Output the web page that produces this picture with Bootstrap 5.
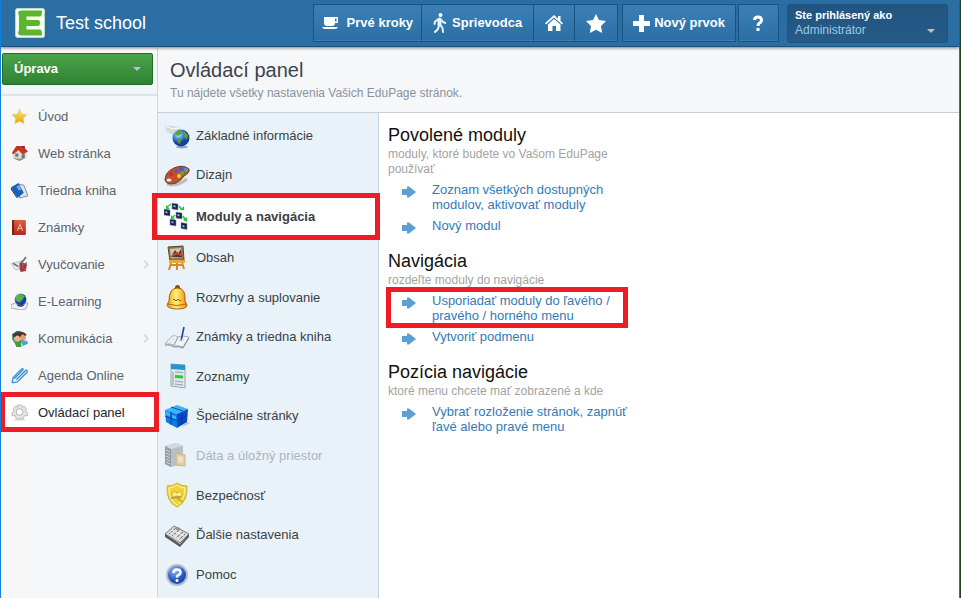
<!DOCTYPE html>
<html lang="sk">
<head>
<meta charset="utf-8">
<meta name="viewport" content="width=device-width, initial-scale=1">
<title>Test school – Ovládací panel</title>
<link href="https://cdn.jsdelivr.net/npm/bootstrap@5.3.0/dist/css/bootstrap.min.css" rel="stylesheet">
<style>
body{font-family:"Liberation Sans",Arial,sans-serif;font-size:13px;line-height:15px;color:#3c434b;background:#fff;border-left:1px solid #1580d8;border-right:1px solid #1c4a1c}
a{text-decoration:none}
.app-shell{border-right:1px solid #1a78c4}
.topbar{min-height:47px;background:#2b6ea3;border-bottom:1px solid #1b4f7c;box-shadow:0 1px 3px rgba(0,0,0,.5);padding:3px 11px 3px 14px;z-index:5}
.school{font-size:18px;line-height:22px;color:#fff;padding-left:3px}
.tool{height:38px;border:1px solid #1c527f;border-radius:0;background:linear-gradient(#3a80b7,#2c6ea4);box-shadow:inset 0 -1px #3a7db3;color:#fff;font-size:13px;line-height:16px;font-weight:700;padding:0 8px;margin-left:-1px}
.tool:hover{color:#fff;background:#3a80b7}
.tool-wide{padding:0 11px}
.tool-guide{gap:6px}
.tool-new{padding:0 10px}
.tool-help{margin-left:2px}
.userbox{width:161px;height:39px;background:linear-gradient(#22557f,#255b88);border:1px solid #1f5280;border-radius:3px;color:#9fc8ec;font-size:12px;line-height:15px;padding:0 12px 0 7px;text-align:left}
.userbox strong{font-size:11px;color:#fff}
.caret{border:4px solid transparent;border-top-color:#b9c4cc;border-bottom:0}
.sidebar{width:157px;background:#f6f7f9;border-right:1px solid #cfd5da}
.side-top{padding:6px 4px 9px 1px;background:linear-gradient(#f8f9fb,#f1f5fa);border-bottom:2px solid #dfe4e9}
.side-list{padding-top:2px}
.edit-btn{height:32px;background:linear-gradient(#4aa44b,#2f8233);border:1px solid #246a27;border-radius:2px;color:#fff;font-weight:700;font-size:13px;padding:0 11px}
.edit-btn:hover{background:#3b923e;color:#fff}
.side-link{height:37px;padding:0 8px 0 10px;gap:10px;color:#58636e}
.side-link.current{background:#fff;color:#22272c;position:relative}
.current::after{content:"";position:absolute;border:5px solid #ee1c24;pointer-events:none;z-index:3}
.side-link.current::after{inset:-2px -2px -1px -1px}
.page-head{background:#f6f7f9;border-bottom:1px solid #c9cfd5;padding:11px 12px 11px;min-height:66px}
.page-head h1{font-size:20px;line-height:24px;color:#3b4450;margin:0 0 4px}
.page-head p{font-size:12px;line-height:15px;color:#8793a0;margin:0}
.panel-menu{width:221px;background:#e9f2f8;border-right:1px solid #c3d6e8;padding:3px 0 4px}
.panel-link{height:40px;padding:0 6px;gap:6px;color:#3b3f46}
li:nth-child(1)>.panel-link,li:nth-child(2)>.panel-link,li:nth-child(4)>.panel-link,li:nth-child(6)>.panel-link,li:nth-child(8)>.panel-link,li:nth-child(11)>.panel-link{height:39px}
.panel-link.current{height:44px;background:#fff;font-weight:700;position:relative}
.panel-link.current::after{inset:-1px -2px -2px -6px}
.panel-link.off{color:#adb5bc}
.options{padding:11px 9px;background:#fff}
.group{max-width:246px;margin-bottom:16px}
.group h2{font-size:18px;line-height:23px;color:#111;margin:0;font-weight:400}
.group p{font-size:12px;line-height:15px;color:#a3a3a3;margin:0 0 5px}
.group li{padding-left:14px;gap:16px;margin-bottom:6px}
.group a{color:#337ab7}
.group svg{margin-top:4px}
.marked{position:relative}
.marked::after{content:"";position:absolute;inset:-6px 6px -5px -2px;border:5px solid #ee1c24;pointer-events:none}
svg{flex:none;display:block}
</style>
<script src="https://cdn.jsdelivr.net/npm/bootstrap@5.3.0/dist/js/bootstrap.bundle.min.js"></script>
</head>
<body>
<svg width="0" height="0" class="position-absolute" aria-hidden="true">
<defs>
<linearGradient id="gGold" x2="0" y2="1"><stop stop-color="#ffe873"/><stop offset="1" stop-color="#dfa40c"/></linearGradient>
<linearGradient id="gBell" x2="1" y2="0"><stop stop-color="#ee9a0c"/><stop offset=".45" stop-color="#fff07a"/><stop offset="1" stop-color="#ef9000"/></linearGradient>
<radialGradient id="gGlobe" cx=".35" cy=".3"><stop stop-color="#cdeeff"/><stop offset=".5" stop-color="#4a97dc"/><stop offset="1" stop-color="#173fa0"/></radialGradient>
<radialGradient id="gHelp" cx=".4" cy=".3"><stop stop-color="#8fb6ff"/><stop offset="1" stop-color="#1c4fb8"/></radialGradient>
<linearGradient id="gRed" x2="0" y2="1"><stop stop-color="#e06045"/><stop offset="1" stop-color="#b0281a"/></linearGradient>
<symbol id="arrow" viewBox="0 0 14 12"><path d="M0 3h5V.500h2L14 6l-7 5.500H5V9H0z" fill="#5b9fd3"/></symbol>
<symbol id="chev" viewBox="0 0 6 9"><path d="M1 .5l4 4-4 4" fill="none" stroke="#d9dcdf" stroke-width="1.800"/></symbol>
</defs>
</svg>
<div class="app-shell d-flex flex-column min-vh-100">
<header class="topbar d-flex align-items-center position-relative">
  <a href="#" class="d-flex align-items-center gap-2 me-auto">
    <svg width="30" height="30" viewBox="0 0 30 30"><rect x=".5" y=".5" width="29" height="29" rx="2" fill="#f7fff3" stroke="#b8ddc4"/><path d="M7 2.500h20q0 6-2 6H11.500V12H23q2 0 2 3t-2 3H11.500v3.500H25q2 0 2 6H7q-4 0-4-3 1-1.500 1-4V9Q4 6 3 5q0-2.500 4-2.500z" fill="#5bb531"/></svg>
    <span class="school">Test school</span>
  </a>
  <nav class="d-flex" aria-label="Nástroje">
    <button type="button" class="btn tool d-flex align-items-center gap-2"><svg width="17" height="14" viewBox="0 0 17 14" fill="#fff"><path d="M2 1h14v6h-3q0 3-3 3H5Q2 10 2 7zm11 1.500V5.500h1.500v-3zM0 11h16q-1 2-3 2H3q-2 0-3-2z" fill-rule="evenodd"/></svg>Prvé kroky</button>
    <button type="button" class="btn tool tool-wide tool-guide d-flex align-items-center"><svg width="13" height="20" viewBox="0 0 13 20" fill="none" stroke="#e4f3ff" stroke-linecap="round" stroke-linejoin="round"><circle cx="7.500" cy="2" r="2" fill="#fff" stroke="none"/><path d="M6.500 6.500v5" stroke-width="4"/><path d="M5.500 6L2 8.500 1.500 11M8 6.500l2 2.500 2.500 1M6 12l-1 4-3 3M7.500 12l2 3 .5 4" stroke-width="2"/></svg>Sprievodca</button>
    <button type="button" class="btn tool tool-wide" aria-label="Domov"><svg width="18" height="16" viewBox="0 0 18 16" fill="#fff"><path d="M9 0l4 3.700V1h2.500v5L18 8.300 17 9.500 9 2.500 1 9.500 0 8.300zM9 4l6.500 5.500V16H11v-5H7.500v5H3V9.500z"/></svg></button>
    <button type="button" class="btn tool tool-wide" aria-label="Obľúbené"><svg width="20" height="19" viewBox="0 0 20 19"><path d="M10 0l3 6 7 1-5 5 1.200 7L10 15.700 3.800 19 5 12 0 7l7-1z" fill="#fff"/></svg></button>
    <button type="button" class="btn tool tool-new d-flex align-items-center gap-1 ms-1"><svg width="17" height="17" viewBox="0 0 17 17"><path d="M6 0h5v6h6v5h-6v6H6v-6H0V6h6z" fill="#fff"/></svg>Nový prvok</button>
    <button type="button" class="btn tool tool-wide tool-help" aria-label="Pomoc"><svg width="17" height="17" viewBox="0 0 17 17"><path d="M4.500 5Q4.500 2 8 2t3.500 3Q11.500 7 9.500 8 8 9 8 11" fill="none" stroke="#fff" stroke-width="3"/><path d="M6.500 13h3v3h-3z" fill="#fff"/></svg></button>
  </nav>
  <button type="button" class="btn userbox d-flex align-items-center justify-content-between ms-2"><span><strong>Ste prihlásený ako</strong><br>Administrátor</span><span class="caret mt-3"></span></button>
</header>
<div class="d-flex flex-fill">
<aside class="sidebar flex-shrink-0">
  <div class="side-top"><button type="button" class="btn edit-btn w-100 d-flex align-items-center justify-content-between">Úprava<span class="caret"></span></button></div>
  <ul class="list-unstyled side-list mb-0">
    <li><a class="side-link d-flex align-items-center" href="#"><svg width="17" height="17" viewBox="0 0 16 16"><path d="M8 1l2 4.600 5 .7-3.600 3.500.9 4.900L8 12.500l-4.500 2.200 1-4.900L1 6.300l5-.7z" fill="url(#gGold)" stroke="#e5c35a" stroke-width=".5"/></svg>Úvod</a></li>
    <li><a class="side-link d-flex align-items-center" href="#"><svg width="17" height="17" viewBox="0 0 16 16"><path d="M1 7l6-5 7 3 1 7-7 3-6-3z" fill="#dedede"/><path d="M5 1h6l5 5-5 3-4-4-5 4-1-2z" fill="#c93422"/><path d="M10 1h3v3z" fill="#7b271b"/><path d="M4 8h3v3H4zM10 9l3-1v4l-3 1z" fill="#777"/><path d="M1 12l7 3 6-3-6 1z" fill="#89967b"/></svg>Web stránka</a></li>
    <li><a class="side-link d-flex align-items-center" href="#"><svg width="17" height="17" viewBox="0 0 16 16"><path d="M7 2l5 1 4 10-8 2z" fill="#dce6ee" stroke="#536f88" stroke-width=".7"/><path d="M0 5l7-4 5 9-6 5z" fill="#1d5fb4"/><path d="M5 4l3-1 2 4-3 1z" fill="#71a9e5"/><path d="M0 5l6 10-1-.5L0 7z" fill="#0c356f"/></svg>Triedna kniha</a></li>
    <li><a class="side-link d-flex align-items-center" href="#"><svg width="17" height="17" viewBox="0 0 16 16"><rect x="1" y="1" width="13" height="14" rx="1" fill="url(#gRed)"/><path d="M1 1h2v14H1z" fill="#822216"/><path d="M6 11l2.500-6L11 11M7 9h3" fill="none" stroke="#efb49c"/></svg>Známky</a></li>
    <li><a class="side-link d-flex align-items-center" href="#"><svg width="17" height="17" viewBox="0 0 16 16"><path d="M0 7l9-2 2 7-7 1z" fill="#e6e9ed" stroke="#a2aab3" stroke-width=".6"/><path d="M2 7l5 3M14 1L9 8" stroke="#5e6b78" stroke-width="1.500"/><path d="M8 6l7 1-1 7-5 1-1-4z" fill="#b42d36"/><path d="M10 4l1 5 4-3M10 10l4 3" stroke="#6e7379" fill="none"/></svg><span class="flex-fill">Vyučovanie</span><svg width="6" height="9"><use href="#chev"/></svg></a></li>
    <li><a class="side-link d-flex align-items-center" href="#"><svg width="17" height="17" viewBox="0 0 16 16"><path d="M0 11l5-2 5 2 6-2-2 6-5 1-9-2z" fill="#eef0f3" stroke="#8c97a4" stroke-width=".7"/><circle cx="9" cy="6" r="5.500" fill="url(#gGlobe)"/><path d="M5 3l4-2 4 2-3 3-2 3-3-2z" fill="#5cb631"/><path d="M5 10q4 3 8 0l-1 2q-3 2-6 0z" fill="#243b69"/></svg>E-Learning</a></li>
    <li><a class="side-link d-flex align-items-center" href="#"><svg width="17" height="17" viewBox="0 0 16 16"><circle cx="7" cy="7" r="6" fill="#3b8a72"/><path d="M1 4l5-3 6 1-3 3-7 2z" fill="#26536b"/><circle cx="6" cy="8" r="3" fill="#eeb88a"/><circle cx="11" cy="7" r="3" fill="#dda16e"/><path d="M3 6q3-4 6 0M8 5q3-4 6 0" stroke="#5b2c16" fill="none" stroke-width="2"/><path d="M3 11h6l1 5H5z" fill="#459b37"/><path d="M9 10h6l1 3-5 2z" fill="#43a6dd"/></svg><span class="flex-fill">Komunikácia</span><svg width="6" height="9"><use href="#chev"/></svg></a></li>
    <li><a class="side-link d-flex align-items-center" href="#"><svg width="17" height="17" viewBox="0 0 16 16" fill="none" stroke="#3f93d3" stroke-width="1.300"><path d="M1 15l1-5 8-8q2-1 1 1l-8 8M1 15l5-1 9-9q1-2-1-2l-9 9"/></svg>Agenda Online</a></li>
    <li><a class="side-link current d-flex align-items-center" href="#" aria-current="page"><svg width="17" height="17" viewBox="0 0 16 16"><path d="M6 1h4l.5 2 2-1 2 3-1 2 2 1v3h-3l-1 3H5l-1-3H1V8l2-1-1-2 2-3 2 1z" fill="#e5e5e5" stroke="#aaa" stroke-width=".7"/><circle cx="8" cy="7.500" r="3" fill="#fff" stroke="#bbb"/><path d="M3 15h10" stroke="#ccc"/></svg>Ovládací panel</a></li>
  </ul>
</aside>
<main class="flex-fill d-flex flex-column">
  <div class="page-head"><h1 class="fw-normal">Ovládací panel</h1><p>Tu nájdete všetky nastavenia Vašich EduPage stránok.</p></div>
  <div class="d-flex flex-fill">
  <nav class="panel-menu flex-shrink-0" aria-label="Nastavenia">
    <ul class="list-unstyled mb-0">
      <li><a class="panel-link d-flex align-items-center" href="#"><svg width="26" height="26" viewBox="0 0 26 26"><path d="M1 2l14 2 3 7-7 3-9-6z" fill="#d5dadd"/><path d="M2 3l6 3 7-1" stroke="#fff" fill="none"/><ellipse cx="18" cy="24" rx="6" ry="1.500" fill="#9aa8b3"/><circle cx="17" cy="15" r="8.500" fill="url(#gGlobe)"/><path d="M11 11l3-4 4 1-1 3-3 2zM13 15l4 1-1 5-2-1zM20 8l4 4-1 5-3-3z" fill="#5a9e38"/></svg>Základné informácie</a></li>
      <li><a class="panel-link d-flex align-items-center" href="#"><svg width="26" height="26" viewBox="0 0 26 26"><path d="M3 22q10 3 20-5" stroke="#b7bec5" stroke-width="3" fill="none"/><path d="M1 18Q1 10 10 6t15 1q1 4-5 7-2 4-8 7-9 3-11-3z" fill="#b4582a" stroke="#7d3718"/><ellipse cx="5" cy="18" rx="2.500" ry="1.500" fill="#e9f2f8"/><g><circle cx="7" cy="12" r="2" fill="#e0222c"/><circle cx="12" cy="9" r="2" fill="#8d3bd6"/><circle cx="17" cy="7" r="2" fill="#3859e2"/><circle cx="22" cy="8" r="2" fill="#30a6dc"/><circle cx="10" cy="16" r="2" fill="#f03a2b"/><circle cx="15" cy="14" r="2" fill="#f2ce28"/><circle cx="18" cy="11" r="1.800" fill="#4cb83e"/></g></svg>Dizajn</a></li>
      <li><a class="panel-link current d-flex align-items-center" href="#" aria-current="true"><svg width="26" height="28" viewBox="0 0 26 28"><g fill="#111e48" stroke="#8792ab" stroke-width=".6"><path d="M8 1l6 1v6l-6-1zM0 7l6 1v6l-6-1zM12 10l6 1v6l-6-1zM6 17l6 1v6l-6-1zM17 20.500l6 1v6l-6-1z"/></g><g fill="#8fbdf0"><path d="M9.500 3l2 .5v2l-2-.5zM1.500 9l2 .5v2l-2-.5zM13.500 12l2 .5v2l-2-.5zM7.500 19l2 .5v2l-2-.5zM18.500 23l2 .5v2l-2-.5z"/></g><path d="M7 2L3 5M15 4l3 4M11 13l-3 3M19 14l3 5" stroke="#28c83c" stroke-width="1.500"/><path d="M2 3v4h4zM16 8h4V4zM7 13v4h4zM19 18l4 2V15z" fill="#28c83c"/></svg>Moduly a navigácia</a></li>
      <li><a class="panel-link d-flex align-items-center" href="#"><svg width="26" height="26" viewBox="0 0 26 26"><path d="M8 14L5 25M17 14l3 10M13 17v8M6 20h13" stroke="#d38c2b" stroke-width="2"/><path d="M4 2l15-1 1 14-14 1z" fill="#9f7847" stroke="#63411f"/><path d="M6 4l11-1 1 9-11 1z" fill="#c8c9b8"/><path d="M7 12l4-7 3 4 3-5 1 8z" fill="#483a38"/><path d="M8 11l5-3 4 2" stroke="#d6442c" stroke-width="2" fill="none"/><path d="M5 15h16v3H5z" fill="#e7a746"/></svg>Obsah</a></li>
      <li><a class="panel-link d-flex align-items-center" href="#"><svg width="26" height="26" viewBox="0 0 26 26"><circle cx="13.500" cy="3.500" r="2.500" fill="#8c4b14"/><path d="M5 17Q5 4 13.500 4T21 17l2 4q0 4-9.500 4T3 21z" fill="url(#gBell)" stroke="#a95e08"/><path d="M4 20q9 3 18 0" stroke="#b76906" fill="none"/><path d="M9 16q1-2 2 0t2 0 2 0 2 0" stroke="#8b5a0d" fill="none"/></svg>Rozvrhy a suplovanie</a></li>
      <li><a class="panel-link d-flex align-items-center" href="#"><svg width="26" height="26" viewBox="0 0 26 26"><path d="M1 20l7-8q4-1 6 1 4-2 11 0l-6 10q-6-2-8-1-4-3-10-2z" fill="#f4f5f7" stroke="#a7aeb8"/><path d="M14 13l-4 8M1 21q6-1 9 2 5-1 9 1l6-10" stroke="#858e9b" fill="none"/><path d="M20 3l-3 14" stroke="#263fae" stroke-width="1.600"/><path d="M7 15h4M15 16h5M5 18h4" stroke="#d0d4d9"/></svg>Známky a triedna kniha</a></li>
      <li><a class="panel-link d-flex align-items-center" href="#"><svg width="26" height="26" viewBox="0 0 26 26"><path d="M7 1l14 1v23L7 23z" fill="#dfe6e8" stroke="#9aa8af"/><path d="M7 1l14 1v5L7 6z" fill="#2595cf"/><path d="M11 12l8 .5v3L11 15z" fill="#2bc93d"/><path d="M9 9v13M11 9l8 .5M11 18l8 1M11 21l8 1" stroke="#8fa6b0"/></svg>Zoznamy</a></li>
      <li><a class="panel-link d-flex align-items-center" href="#"><svg width="26" height="26" viewBox="0 0 26 26"><path d="M18 24l8-4-4-1z" fill="#b3c4d2"/><path d="M1 7l12-5 11 4-11 5z" fill="#39b5fb"/><path d="M1 7l12 4v14L2 19z" fill="#087ce8"/><path d="M13 11l11-5-1 13-10 6z" fill="#0a48cb"/><path d="M7 9v13M1 13l12 5 10-6M18 9v13M7 4l12 4" stroke="#02318d" stroke-width=".8" fill="none"/><path d="M2 8l4 2v4l-4-2zM8 12l4 1v3l-4-1z" fill="#2fb8fa"/></svg>Špeciálne stránky</a></li>
      <li><a class="panel-link off d-flex align-items-center" href="#" aria-disabled="true"><svg width="26" height="26" viewBox="0 0 26 26"><path d="M1 4l11-3 7 3v18L7 25l-6-3z" fill="#babfc4"/><path d="M1 4l6 3v18l-6-3z" fill="#949ba2"/><path d="M1 4l11-3 7 3L7 7z" fill="#d5d8dc"/><path d="M2 8l4 2M2 11l4 2M2 14l4 2M2 17l4 2M2 20l4 2" stroke="#d6d9dc"/><path d="M12 11l9 2v11l-9-1z" fill="#e2cca9" stroke="#cab28f"/><path d="M14 14l5 1v6l-5-1z" fill="#f1e0c3"/></svg>Dáta a úložný priestor</a></li>
      <li><a class="panel-link d-flex align-items-center" href="#"><svg width="26" height="26" viewBox="0 0 26 26"><path d="M3 4q7 0 10-3 4 3 10 3 1 16-10 21Q2 20 3 4z" fill="#efd23a" stroke="#cfb23e"/><path d="M5 6q5 0 8-3 4 3 8 3 0 12-8 17Q5 18 5 6z" fill="none" stroke="#fff7a5"/><path d="M8 11q2-3 5 0 3-3 5 0v3q-2 2-5 0-3 2-5 0z" fill="#fff07a" stroke="#c9ad35"/><path d="M7 16l10-1M13 16l6 4" stroke="#b39a45" stroke-width="1.500"/></svg>Bezpečnosť</a></li>
      <li><a class="panel-link d-flex align-items-center" href="#"><svg width="26" height="26" viewBox="0 0 26 26"><path d="M1 12l9-8 15 8-9 9z" fill="#d9d9d8" stroke="#777a7d"/><path d="M1 12v3l15 10 9-10v-3l-9 10z" fill="#5a5c5e"/><path d="M5 12l7-6M8 14l7-6M12 16l7-6M15 18l6-6" stroke="#6a6d70"/><path d="M5 10l12 8M8 8l12 6" stroke="#f6f6f6"/><path d="M11 6l3-1 3 2-3 2z" fill="#8c9297"/></svg>Ďalšie nastavenia</a></li>
      <li><a class="panel-link d-flex align-items-center" href="#"><svg width="26" height="26" viewBox="0 0 26 26"><circle cx="13" cy="14" r="10" fill="url(#gHelp)" stroke="#b5bdcb" stroke-width="2"/><path d="M9.500 12Q9.500 8.500 13 8.500t3.500 3Q16.500 13 14.500 14 13 14.500 13 16.500" stroke="#fff" stroke-width="2.500" fill="none"/><circle cx="13" cy="19.500" r="1.500" fill="#fff"/></svg>Pomoc</a></li>
    </ul>
  </nav>
  <div class="options flex-fill">
    <section class="group"><h2>Povolené moduly</h2><p>moduly, ktoré budete vo Vašom EduPage používať</p>
      <ul class="list-unstyled mb-0">
        <li class="d-flex"><svg width="14" height="12"><use href="#arrow"/></svg><a href="#">Zoznam všetkých dostupných modulov, aktivovať moduly</a></li>
        <li class="d-flex"><svg width="14" height="12"><use href="#arrow"/></svg><a href="#">Nový modul</a></li>
      </ul></section>
    <section class="group"><h2>Navigácia</h2><p>rozdeľte moduly do navigácie</p>
      <ul class="list-unstyled mb-0">
        <li class="d-flex marked"><svg width="14" height="12"><use href="#arrow"/></svg><a href="#">Usporiadať moduly do ľavého / pravého / horného menu</a></li>
        <li class="d-flex"><svg width="14" height="12"><use href="#arrow"/></svg><a href="#">Vytvoriť podmenu</a></li>
      </ul></section>
    <section class="group"><h2>Pozícia navigácie</h2><p>ktoré menu chcete mať zobrazené a kde</p>
      <ul class="list-unstyled mb-0">
        <li class="d-flex"><svg width="14" height="12"><use href="#arrow"/></svg><a href="#">Vybrať rozloženie stránok, zapnúť ľavé alebo pravé menu</a></li>
      </ul></section>
  </div>
  </div>
</main>
</div>
</div>
</body>
</html>
